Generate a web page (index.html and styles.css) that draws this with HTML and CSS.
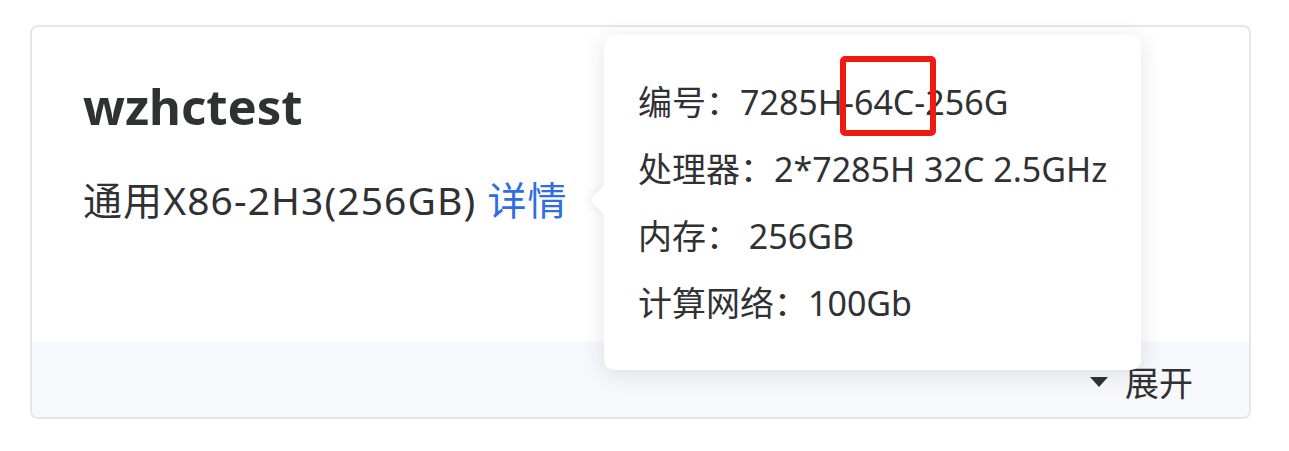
FILE: index.html
```html
<!DOCTYPE html>
<html lang="zh-CN">
<head>
    <meta charset="UTF-8">
    <title>机型卡片</title>
    <link rel="stylesheet" href="styles.css">
</head>
<body>
    <div class="card">
        <div class="card-body">
            <h2 class="card-title">wzhctest</h2>
            <p class="card-spec">通用X86-2H3(256GB) <a class="detail-link" href="#">详情</a></p>
        </div>
        <div class="card-footer">
            <span class="expand"><span class="caret"></span>展开</span>
        </div>

        <!-- 详情弹层 -->
        <div class="popover">
            <div class="pop-row">编号：7285H<span class="mark">-64C-</span>256G</div>
            <div class="pop-row">处理器：2*7285H 32C 2.5GHz</div>
            <div class="pop-row">内存： 256GB</div>
            <div class="pop-row">计算网络：100Gb</div>
        </div>
    </div>
</body>
</html>
```

FILE: styles.css
```css
body {
    margin: 0;
    padding: 25px 38px 32px 30px;
    background: #fff;
    font-family: "Noto Sans", "Noto Sans CJK SC", sans-serif;
    color: #303133;
}

.card {
    position: relative;
    height: 390px;
    border: 2px solid #e6e6e8;
    border-radius: 8px;
    display: flex;
    flex-direction: column;
}

.card-body {
    height: 315px;
    padding: 0 0 0 51px;
    background: #fff;
    border-radius: 8px 8px 0 0;
}

.card-title {
    margin: 0;
    padding-top: 46px;
    font-size: 49px;
    line-height: 66px;
    font-weight: 700;
    color: #303133;
}

.card-spec {
    margin: 37px 0 0;
    font-size: 39px;
    line-height: 48px;
    letter-spacing: 1.1px;
    white-space: nowrap;
}

.detail-link {
    color: #2f6de0;
    text-decoration: none;
}

.card-footer {
    flex: 1;
    background: #f7f8fc;
    border-radius: 0 0 6px 6px;
    display: flex;
    justify-content: flex-end;
    align-items: center;
    padding-right: 56px;
    padding-top: 4px;
}

.expand {
    display: flex;
    align-items: center;
    font-size: 34px;
    color: #303133;
}

.caret {
    width: 0;
    height: 0;
    border-left: 9px solid transparent;
    border-right: 9px solid transparent;
    border-top: 10px solid #303133;
    margin-right: 17px;
}

.popover {
    position: absolute;
    left: 572px;
    top: 8px;
    width: 469px;
    padding: 34px 34px 33px;
    background: #fff;
    border-radius: 10px;
    box-shadow: 0 4px 22px rgba(40, 50, 80, 0.13);
    font-size: 34px;
}

.popover::before {
    content: "";
    position: absolute;
    left: -10px;
    top: 155px;
    width: 20px;
    height: 20px;
    background: #fff;
    transform: rotate(45deg);
    box-shadow: -3px 3px 6px rgba(40, 50, 80, 0.05);
}

.pop-row {
    position: relative;
    line-height: 67px;
    white-space: nowrap;
}

.mark {
    position: relative;
}

.mark::after {
    content: "";
    position: absolute;
    left: -3px;
    right: -11px;
    top: -23px;
    bottom: -11px;
    border: 6px solid #f01a10;
    border-radius: 5px;
}
```
